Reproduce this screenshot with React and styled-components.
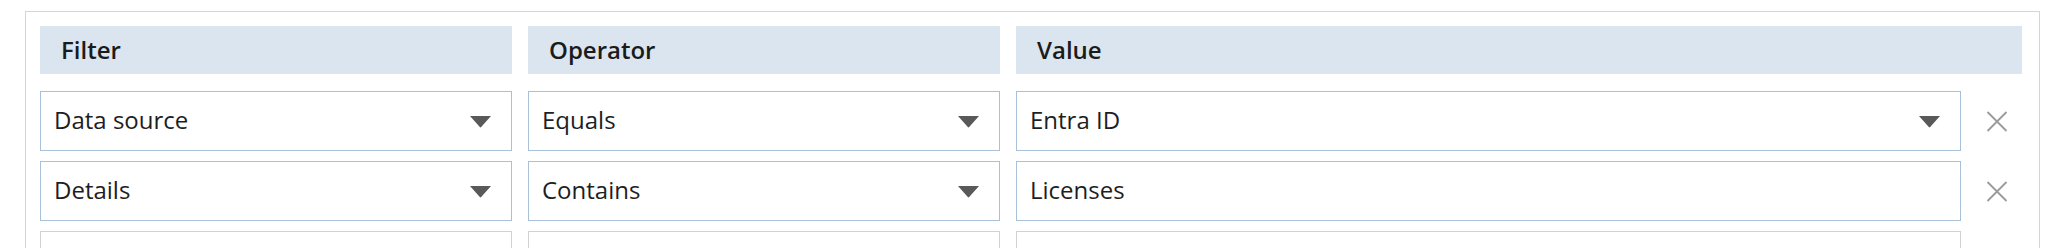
import React from 'react';
import styled, { createGlobalStyle } from 'styled-components';

const GlobalStyle = createGlobalStyle`
  html, body {
    margin: 0;
    padding: 0;
    background: #ffffff;
  }
  body {
    font-family: 'Open Sans', 'Noto Sans', 'Liberation Sans', sans-serif;
    color: #1e1e1e;
  }
`;

const Page = styled.div`
  box-sizing: border-box;
  height: 248px;
  overflow: hidden;
  padding: 11px 0 0 25px;
`;

const Panel = styled.div`
  box-sizing: border-box;
  width: 2015px;
  height: 260px;
  border: 1px solid #c6d8ec;
  padding: 14px 17px 0 14px;
  display: flex;
  flex-direction: column;
  gap: 10px;
`;

const HeaderRow = styled.div`
  display: flex;
  gap: 16px;
  margin-bottom: 7px;
`;

const HeadCell = styled.div`
  box-sizing: border-box;
  height: 48px;
  background: #dbe5ef;
  padding: 0 0 2px 21px;
  display: flex;
  align-items: center;
  font-size: 24px;
  font-weight: 600;
  color: #1b1b1b;
  ${(p) => (p.$grow ? 'flex: 1;' : `width: ${p.$w}px;`)}
`;

const Row = styled.div`
  display: flex;
  gap: 16px;
`;

const Field = styled.div`
  box-sizing: border-box;
  height: 60px;
  border: 1px solid ${(p) => (p.$empty ? '#d2d2d2' : '#a9c0d9')};
  background: #ffffff;
  padding: 0 19px 0 13px;
  display: flex;
  align-items: center;
  justify-content: space-between;
  font-size: 24px;
  ${(p) => (p.$grow ? 'flex: 1;' : `width: ${p.$w}px;`)}
`;

const Label = styled.span`
  margin-bottom: 4px;
`;

const ValueCell = styled.div`
  flex: 1;
  display: flex;
`;

const RemoveSlot = styled.div`
  width: 61px;
  display: flex;
  align-items: center;
  justify-content: center;
  padding-left: 10px;
  box-sizing: border-box;
`;

const Arrow = () => (
  <svg width="23" height="13" viewBox="0 0 23 13">
    <path d="M1 1 H22 L12.2 12 Q11.5 12.8 10.8 12 Z" fill="#595959" />
  </svg>
);

const Cross = () => (
  <svg width="22" height="21" viewBox="0 0 22 21">
    <path d="M1.5 1 L20.5 20 M20.5 1 L1.5 20" stroke="#9a9a9a" strokeWidth="1.8" fill="none" />
  </svg>
);

const rows = [
  { filter: 'Data source', op: 'Equals', value: 'Entra ID', valueList: true },
  { filter: 'Details', op: 'Contains', value: 'Licenses', valueList: false },
];

const App = () => (
  <>
    <GlobalStyle />
    <Page>
      <Panel>
        <HeaderRow>
          <HeadCell $w={472}>Filter</HeadCell>
          <HeadCell $w={472}>Operator</HeadCell>
          <HeadCell $grow>Value</HeadCell>
        </HeaderRow>
        {rows.map((r) => (
          <Row key={r.filter}>
            <Field $w={472}>
              <Label>{r.filter}</Label>
              <Arrow />
            </Field>
            <Field $w={472}>
              <Label>{r.op}</Label>
              <Arrow />
            </Field>
            <ValueCell>
              <Field $grow>
                <Label>{r.value}</Label>
                {r.valueList && <Arrow />}
              </Field>
              <RemoveSlot>
                <Cross />
              </RemoveSlot>
            </ValueCell>
          </Row>
        ))}
        <Row>
          <Field $w={472} $empty />
          <Field $w={472} $empty />
          <ValueCell>
            <Field $grow $empty />
            <RemoveSlot />
          </ValueCell>
        </Row>
      </Panel>
    </Page>
  </>
);

export default App;
